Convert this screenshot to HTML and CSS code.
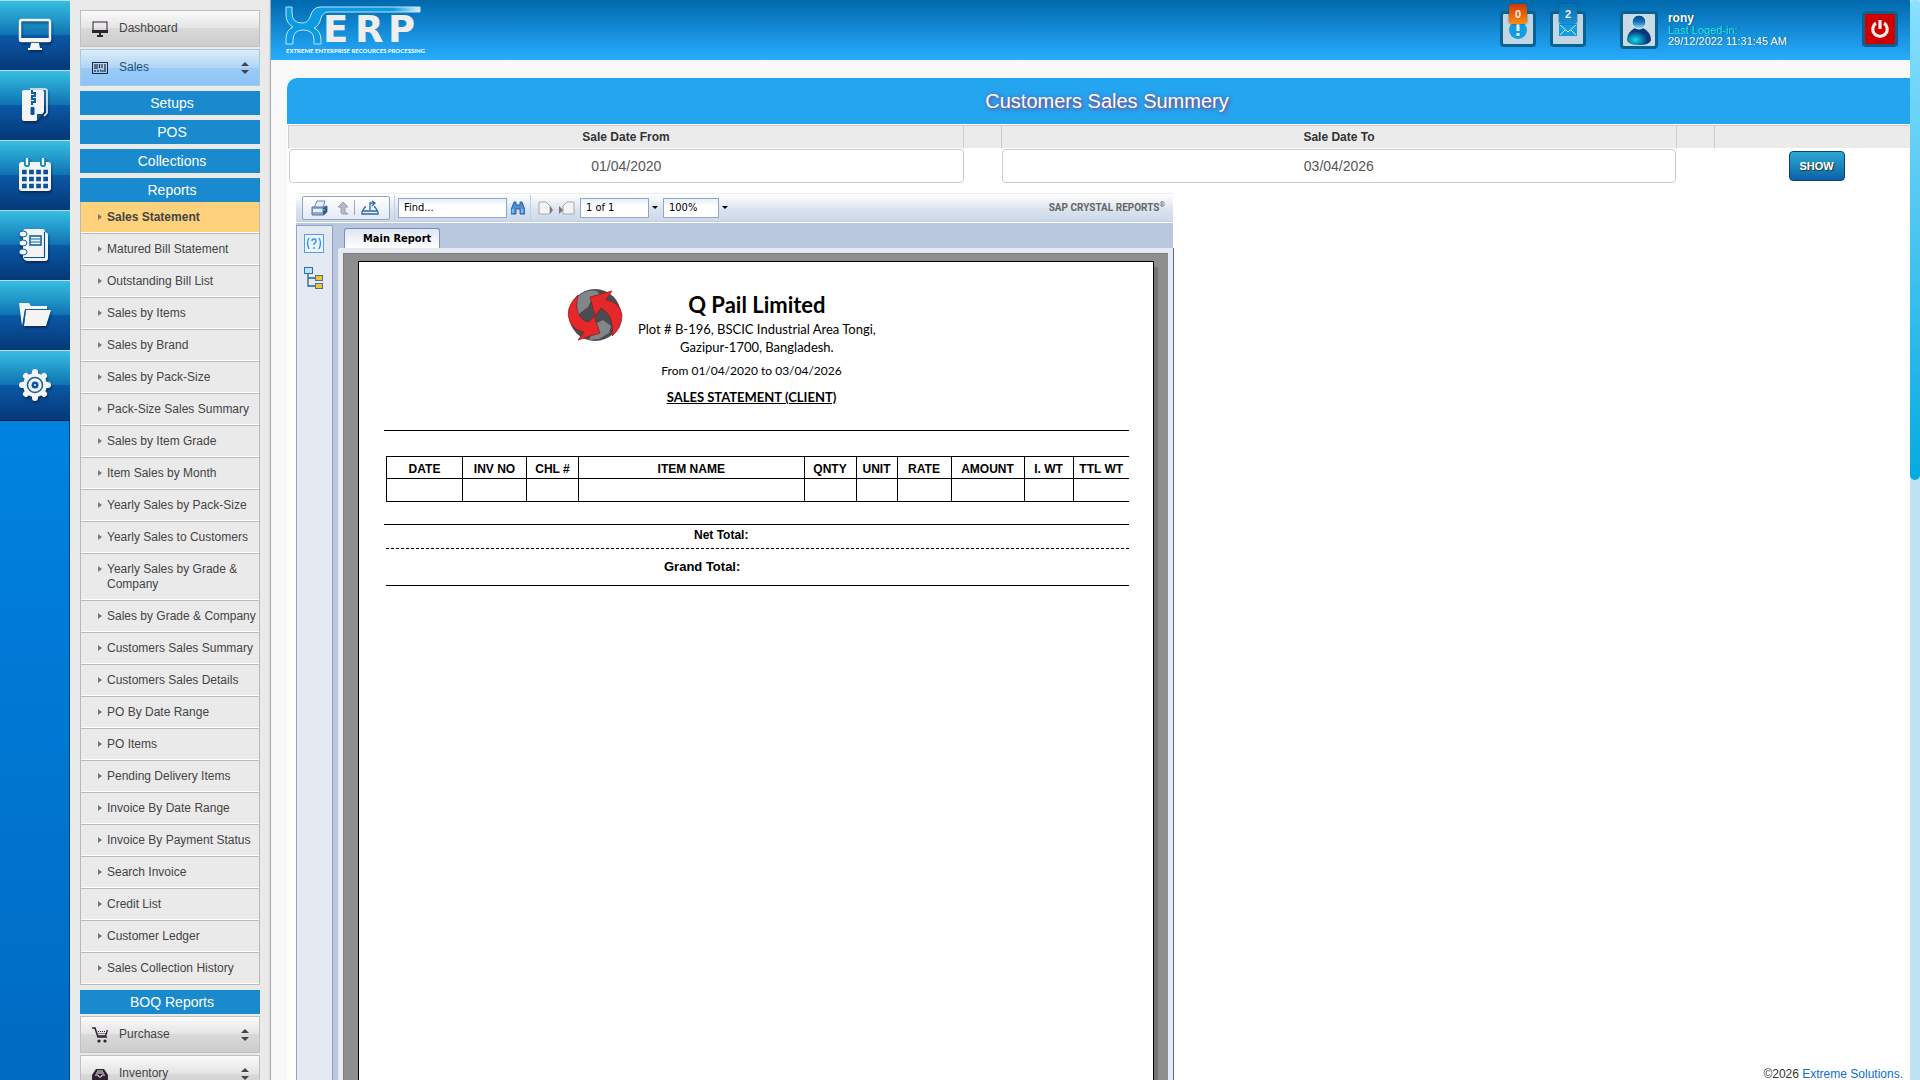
FILE: index.html
```html
<!DOCTYPE html>
<html lang="en">
<head>
    <meta charset="UTF-8">
    <meta name="viewport" content="width=device-width, initial-scale=1.0">
    <title>Customers Sales Summery</title>
    <link rel="stylesheet" href="styles.css">
</head>
<body>
    <div class="shell">
        <nav class="rail" aria-label="Modules">
            <a href="#" aria-label="Desktop">
                <svg width="34" height="34" viewBox="0 0 34 34"><rect x="2" y="2" width="30" height="21" rx="2" fill="none" stroke="#f4f4f4" stroke-width="2.5"/><path d="M1 20h32v2q0 2-2 2H3q-2 0-2-2z" fill="#f4f4f4"/><path d="M13 25h8l1 5h2v2H10v-2h2z" fill="#f4f4f4"/></svg>
            </a>
            <a href="#" aria-label="Archive">
                <svg width="34" height="34" viewBox="0 0 34 34"><path d="M12 1h15q2 0 2 2v22l-3 3" fill="none" stroke="#f4f4f4" stroke-width="1.6"/><path d="M6 2h18q2 0 2 2v20l-8 9H6q-2 0-2-2V4q0-2 2-2z" fill="#f4f4f4"/><path d="M19 32v-6h6z" fill="#0852a0"/><path d="M14 2v3h3v3h-3v3h3v3h-3v3" fill="none" stroke="#0e5f9f" stroke-width="2"/><rect x="12.500" y="19" width="4" height="8" rx="1" fill="#0852a0"/></svg>
            </a>
            <a href="#" aria-label="Calendar">
                <svg width="34" height="34" viewBox="0 0 34 34"><rect x="1" y="4" width="32" height="29" rx="3" fill="#f4f4f4"/><path d="M9 1v5M25 1v5" stroke="#1181b8" stroke-width="6" stroke-linecap="round"/><path d="M9 1v5M25 1v5" stroke="#f4f4f4" stroke-width="2.500" stroke-linecap="round"/><path d="M4 14h26M4 21h26M4 28h26" stroke="#0852a0" stroke-width="4.500" stroke-dasharray="4.700 2.400"/></svg>
            </a>
            <a href="#" aria-label="Notebook">
                <svg width="34" height="34" viewBox="0 0 34 34"><path d="M10 33q-4 0-5-4h21V4q4 0 4 3v23q0 3-3 3z" fill="#f4f4f4"/><path d="M5 4q0-3 3-3h16q3 0 3 3v25H5z" fill="#f4f4f4"/><path d="M26.500 4v25.500H6" stroke="#0852a0" fill="none" stroke-width="1.200"/><rect x="12" y="8" width="11" height="9" fill="none" stroke="#1064a5" stroke-width="1.600"/><path d="M13 11h9M13 14h9" stroke="#1064a5" stroke-width="1.200"/><g fill="#f4f4f4" stroke="#0e62a5"><ellipse cx="5" cy="6" rx="4" ry="3"/><ellipse cx="5" cy="15" rx="4" ry="3"/><ellipse cx="5" cy="24" rx="4" ry="3"/></g></svg>
            </a>
            <a href="#" aria-label="Folder">
                <svg width="34" height="34" viewBox="0 0 34 34"><path d="M1 5h10l2 3h16v3H7L4 28z" fill="#f4f4f4"/><path d="M8 12h25l-5 16H6z" fill="#f4f4f4"/><path d="M29 11.500H7.500L5.500 26" fill="none" stroke="#0f5fa0"/></svg>
            </a>
            <a href="#" aria-label="Settings">
                <svg width="34" height="34" viewBox="0 0 34 34"><g stroke="#f4f4f4" stroke-width="6" stroke-linecap="round"><path d="M17 4v26M4 17h26M8 8l18 18M26 8L8 26"/></g><circle cx="17" cy="17" r="12" fill="#f4f4f4"/><circle cx="17" cy="17" r="7.500" fill="none" stroke="#0f5fa0" stroke-width="1.500"/><circle cx="17" cy="17" r="3.500" fill="#0852a0"/><circle cx="17" cy="17" r="1" fill="#f4f4f4"/></svg>
            </a>
        </nav>

        <aside class="sidebar">
            <a class="menu-btn" href="#">
                <svg width="16" height="16" viewBox="0 0 16 16"><rect x="1" y="1" width="14" height="10" fill="none" stroke="#2f2130"/><path d="M0 9h16v3H0zM7 12h2v2H7zM5 14h6v2H5z" fill="#2f2130"/></svg>
                <span>Dashboard</span>
            </a>
            <a class="menu-btn active" href="#">
                <svg width="16" height="16" viewBox="0 0 16 16"><rect x="0.500" y="2.500" width="15" height="11" fill="none" stroke="#22243c"/><path d="M3 4v5M5 4v5M7.500 4v4M10 4v4M13 4v8M3 10v2M6 10v2" stroke="#22243c" stroke-width="1.200"/><path d="M8 10h1v2M11 10v2" stroke="#22243c" fill="none"/></svg>
                <span>Sales</span>
                <svg class="updown" width="8" height="12" viewBox="0 0 8 12"><path d="M4 0l4 4H0zM4 12L0 8h8z" fill="#444"/></svg>
            </a>
            <a class="sub-head" href="#">Setups</a>
            <a class="sub-head" href="#">POS</a>
            <a class="sub-head" href="#">Collections</a>
            <a class="sub-head" href="#">Reports</a>
            <ul class="report-list">
                <li class="current"><a href="#">Sales Statement</a></li>
                <li><a href="#">Matured Bill Statement</a></li>
                <li><a href="#">Outstanding Bill List</a></li>
                <li><a href="#">Sales by Items</a></li>
                <li><a href="#">Sales by Brand</a></li>
                <li><a href="#">Sales by Pack-Size</a></li>
                <li><a href="#">Pack-Size Sales Summary</a></li>
                <li><a href="#">Sales by Item Grade</a></li>
                <li><a href="#">Item Sales by Month</a></li>
                <li><a href="#">Yearly Sales by Pack-Size</a></li>
                <li><a href="#">Yearly Sales to Customers</a></li>
                <li><a href="#">Yearly Sales by Grade &amp; Company</a></li>
                <li><a href="#">Sales by Grade &amp; Company</a></li>
                <li><a href="#">Customers Sales Summary</a></li>
                <li><a href="#">Customers Sales Details</a></li>
                <li><a href="#">PO By Date Range</a></li>
                <li><a href="#">PO Items</a></li>
                <li><a href="#">Pending Delivery Items</a></li>
                <li><a href="#">Invoice By Date Range</a></li>
                <li><a href="#">Invoice By Payment Status</a></li>
                <li><a href="#">Search Invoice</a></li>
                <li><a href="#">Credit List</a></li>
                <li><a href="#">Customer Ledger</a></li>
                <li><a href="#">Sales Collection History</a></li>
            </ul>
            <a class="sub-head" href="#">BOQ Reports</a>
            <a class="menu-btn" href="#">
                <svg width="16" height="16" viewBox="0 0 16 16"><path d="M0 1h3l3 9h9" fill="none" stroke="#2f2130" stroke-width="1.600"/><path d="M15.500 3l-2 6H6" fill="none" stroke="#2f2130" stroke-width="1.300"/><path d="M6 4.500h8M6.500 6.500h7" stroke="#2f2130" stroke-dasharray="1 1"/><circle cx="7" cy="14" r="1.600" fill="#2f2130"/><circle cx="13" cy="14" r="1.600" fill="#2f2130"/></svg>
                <span>Purchase</span>
                <svg class="updown" width="8" height="12" viewBox="0 0 8 12"><path d="M4 0l4 4H0zM4 12L0 8h8z" fill="#444"/></svg>
            </a>
            <a class="menu-btn" href="#">
                <svg width="16" height="16" viewBox="0 0 16 16"><path d="M4 3h8l4 6v6H0V9z" fill="#2f2130"/><path d="M5 5h6M4 7h8M3 9h3l1 2h2l1-2h3" fill="none" stroke="#eee"/></svg>
                <span>Inventory</span>
                <svg class="updown" width="8" height="12" viewBox="0 0 8 12"><path d="M4 0l4 4H0zM4 12L0 8h8z" fill="#444"/></svg>
            </a>
        </aside>

        <main class="main">
            <header class="topbar">
                <div class="logo">
                    <svg width="136" height="39" viewBox="0 0 136 39" role="img" aria-label="XERP">
                        <defs>
                            <linearGradient id="bar" x1="0" x2="1"><stop offset="0.8" stop-color="#0b9be3"/><stop offset="1" stop-color="#d8f0fb"/></linearGradient>
                        </defs>
                        <path d="M1 2h6v6q0 10 10 10q6 0 8-6q3-10 10-10h100v5H43q-5 0-7 6q-2 8-7 10q7 3 7 12v4h-7v-4q0-10-11-10q-10 0-10 10v4H1v-5q0-9 7-12q-7-4-7-12z" fill="url(#bar)" stroke="#bfe6fa" stroke-width="1"/>
                        <text class="logo-name" x="38 70 103" y="37">ERP</text>
                    </svg>
                    <span class="logo-tag">EXTREME ENTERPRISE RECOURCES PROCESSING</span>
                </div>
                <div class="top-tools">
                    <button class="tool" type="button" aria-label="Alerts">
                        <svg width="20" height="20" viewBox="0 0 20 20"><circle cx="10" cy="10" r="9" fill="#159be0"/><path d="M10 4v7M10 13v3" stroke="#e9f3f8" stroke-width="3"/></svg>
                        <span class="badge hot">0</span>
                    </button>
                    <button class="tool" type="button" aria-label="Messages">
                        <svg width="20" height="20" viewBox="0 0 20 20"><rect x="1" y="4" width="18" height="12" fill="#159be0"/><path d="M2 5l8 7 8-7M2 15l5-5M18 15l-5-5" fill="none" stroke="#cfe6f1"/></svg>
                        <span class="badge">2</span>
                    </button>
                    <div class="user">
                        <span class="avatar">
                            <svg width="32" height="32" viewBox="0 0 32 32">
                                <defs>
                                    <linearGradient id="head" x1="0" x2="0" y1="0" y2="1"><stop offset="0" stop-color="#0a3d80"/><stop offset="0.500" stop-color="#1273b8"/><stop offset="1" stop-color="#9de8ff"/></linearGradient>
                                    <radialGradient id="torso" cx="0.350" cy="0.700"><stop offset="0" stop-color="#14e0ee"/><stop offset="1" stop-color="#073a7c"/></radialGradient>
                                </defs>
                                <path d="M4 26q0-8 8-12h8q8 4 8 12q-1 5-12 5T4 26z" fill="url(#torso)"/>
                                <circle cx="16" cy="8" r="7" fill="url(#head)" stroke="#e5f3fa"/>
                            </svg>
                        </span>
                        <div class="user-text">
                            <strong>rony</strong>
                            <span class="cyan">Last Loged-in:</span>
                            <span>29/12/2022 11:31:45 AM</span>
                        </div>
                    </div>
                    <button class="tool power" type="button" aria-label="Log out">
                        <svg width="20" height="20" viewBox="0 0 22 22" fill="none" stroke="#eee" stroke-width="3.500"><path d="M6.500 4.500a8 8 0 1 0 9 0M11 1v10"/></svg>
                    </button>
                </div>
            </header>

            <section class="panel">
                <h1>Customers Sales Summery</h1>
                <form class="filter">
                    <div class="filter-head">
                        <label for="dateFrom">Sale Date From</label>
                        <span></span>
                        <label for="dateTo">Sale Date To</label>
                        <span></span>
                        <span></span>
                    </div>
                    <div class="filter-row">
                        <input id="dateFrom" type="text" value="01/04/2020">
                        <span></span>
                        <input id="dateTo" type="text" value="03/04/2026">
                        <span></span>
                        <button class="show-btn" type="button">SHOW</button>
                    </div>
                </form>

                <div class="panel-body">
                    <div class="viewer">
                        <div class="toolbar">
                            <div class="tool-group">
                                <button type="button" aria-label="Print">
                                    <svg width="17" height="16" viewBox="0 0 17 16"><path d="M6 1h8l-2 7H3z" fill="#dfeffc" stroke="#6c86a8"/><path d="M1 7h11l4-1v6l-3 3H1z" fill="#8fa9cc" stroke="#5a769f"/><path d="M2 9h9v3H2z" fill="#e3eefb"/><path d="M12 8l4-2v6l-4 3z" fill="#2d5b9a"/><circle cx="13" cy="10" r="1" fill="#4fd04a"/></svg>
                                </button>
                                <button type="button" aria-label="Up">
                                    <svg width="12" height="14" viewBox="0 0 12 14"><path d="M6 1l5 5H8v5l3 2H6q-2 0-2-2V6H1z" fill="#b6b9c9" stroke="#9a9db2"/></svg>
                                </button>
                                <button class="export" type="button" aria-label="Export">
                                    <svg width="18" height="15" viewBox="0 0 18 15" fill="none" stroke="#2a6aa8" stroke-width="1.300"><path d="M9 10V3h5M11 1l3 2-3 3M5 7h-1l-3 5v2h16v-2l-3-5h-1M1 11h16"/></svg>
                                </button>
                            </div>
                            <div class="tool-find">
                                <input type="text" value="Find..." aria-label="Find">
                                <button type="button" aria-label="Search">
                                    <svg width="14" height="14" viewBox="0 0 14 14"><path d="M3 1h2v3h4V1h2l3 8v4H9V8H5v5H0V9z" fill="#4d8fd0" stroke="#2863a3"/><path d="M2 8v4M11 8v4" stroke="#bfe0fb"/></svg>
                                </button>
                            </div>
                            <div class="tool-pages">
                                <button type="button" aria-label="Previous page">
                                    <svg width="16" height="14" viewBox="0 0 16 14"><path d="M1 1h7l4 4v8H1z" fill="#f3f3f3" stroke="#a9a9a9"/><path d="M12 5l3 4-3 4z" fill="#777"/></svg>
                                </button>
                                <button type="button" aria-label="Next page">
                                    <svg width="16" height="14" viewBox="0 0 16 14"><path d="M4 13V5l4-4h7v12z" fill="#f3f3f3" stroke="#a9a9a9"/><path d="M0 5l4 4-4 4z" fill="#777"/></svg>
                                </button>
                                <input class="page-no" type="text" value="1 of 1" aria-label="Page">
                                <button class="drop" type="button" aria-label="Choose page"></button>
                                <input class="zoom-no" type="text" value="100%" aria-label="Zoom">
                                <button class="drop" type="button" aria-label="Choose zoom"></button>
                            </div>
                            <span class="brand">SAP CRYSTAL REPORTS<sup>®</sup></span>
                        </div>
                        <div class="viewer-body">
                            <div class="side-tools">
                                <button type="button" aria-label="Parameters">
                                    <svg width="20" height="19" viewBox="0 0 20 19"><rect x="0.500" y="0.500" width="19" height="18" fill="#e9f5ff" stroke="#5a9bef"/><path d="M5 4q-3 5 0 11M15 4q3 5 0 11M8 7q0-2 2-2t2 2q0 1-2 3v1M10 13v2" fill="none" stroke="#3b8be8" stroke-width="1.400"/></svg>
                                </button>
                                <button type="button" aria-label="Group tree">
                                    <svg width="20" height="22" viewBox="0 0 20 22"><path d="M4 6v13h8M4 11h8" fill="none" stroke="#2b5f8f" stroke-width="1.300"/><rect x="0.500" y="0.500" width="8" height="6" fill="#b7e4fb" stroke="#2f6ea3"/><rect x="11.500" y="8.500" width="7" height="5" fill="#f3c13a" stroke="#4c7396"/><rect x="11.500" y="16.500" width="7" height="5" fill="#f3c13a" stroke="#4c7396"/></svg>
                                </button>
                            </div>
                            <div class="report-area">
                                <button class="tab" type="button">Main Report</button>
                                <div class="frame">
                                    <article class="page">
                                        <div class="company">
                                            <svg width="56" height="54" viewBox="0 0 56 54">
                                                <circle cx="28" cy="27" r="26" fill="#4a4d50"/>
                                                <path d="M13 7q8-6 17-4l3 4-8 4-4 8-8 6-4 6-6-5q1-12 10-19zM28 36l8-4 8 6-2 7-10 6-10 1z" fill="#81868a"/>
                                                <path d="M11 7Q-3 20 3 34q5 9 14 10l-6 8 22-7-6-17-5 6Q6 30 11 7z" fill="#e5282b" stroke="#8b1719" stroke-width="0.700"/>
                                                <path d="M45 3L23 9l5 19 6-8q14 8 11 28 10-8 10-21Q53 14 39 12z" fill="#e5282b" stroke="#8b1719" stroke-width="0.700"/>
                                            </svg>
                                            <div>
                                                <h2>Q Pail Limited</h2>
                                                <p>Plot # B-196, BSCIC Industrial Area Tongi,<br>Gazipur-1700, Bangladesh.</p>
                                            </div>
                                        </div>
                                        <p class="period">From 01/04/2020 to 03/04/2026</p>
                                        <h3>SALES STATEMENT (CLIENT)</h3>
                                        <div class="statement">
                                            <table>
                                                <colgroup>
                                                    <col class="c-date"><col class="c-inv"><col class="c-chl"><col><col class="c-qnty"><col class="c-unit"><col class="c-rate"><col class="c-amount"><col class="c-iwt"><col class="c-ttl">
                                                </colgroup>
                                                <thead>
                                                    <tr><th>DATE</th><th>INV NO</th><th>CHL #</th><th>ITEM NAME</th><th>QNTY</th><th>UNIT</th><th>RATE</th><th>AMOUNT</th><th>I. WT</th><th>TTL WT</th></tr>
                                                </thead>
                                                <tbody>
                                                    <tr><td></td><td></td><td></td><td></td><td></td><td></td><td></td><td></td><td></td><td></td></tr>
                                                </tbody>
                                            </table>
                                            <div class="net">Net Total:</div>
                                            <div class="grand">Grand Total:</div>
                                        </div>
                                    </article>
                                </div>
                            </div>
                        </div>
                    </div>
                    <footer>©2026 <a href="#">Extreme Solutions.</a></footer>
                </div>
            </section>
        </main>
        <div class="scrollbar"><div class="thumb"></div></div>
    </div>
</body>
</html>
```
FILE: styles.css
```css
* {
    box-sizing: border-box;
}

body {
    margin: 0;
    font-family: "Liberation Sans", Arial, sans-serif;
    font-size: 12px;
    color: #333;
    background: #f9f9f9;
}

a {
    color: inherit;
    text-decoration: none;
}

button {
    padding: 0;
    border: none;
    background: none;
    cursor: pointer;
}

svg {
    display: block;
    flex: none;
}

.shell {
    display: flex;
    height: 100vh;
    overflow: hidden;
}

/* icon rail */
.rail {
    flex: none;
    width: 70px;
    background: linear-gradient(#0084e3, #0082e0 40%, #006bc2);
    box-shadow: inset -1px 0 #004a8c;
}

.rail a {
    display: flex;
    align-items: center;
    justify-content: center;
    height: 70px;
    padding-bottom: 2px;
    border-top: 1px solid #b9dcf0;
    background: linear-gradient(#36bfe2, #0f71b2 50%, #0a58a6 50%, #053878);
}

.rail a:last-child {
    height: 71px;
    border-bottom: 1px solid #0a1c3c;
}

.rail svg {
    filter: drop-shadow(1px 2px 1px rgba(0,0,0,0.4));
}

/* menu */
.sidebar {
    flex: none;
    width: 201px;
    padding: 10px 10px 0;
    overflow: hidden;
    background: #eaeaea;
    border-right: 1px solid #aaa;
    box-shadow: inset -1px 0 #ddd;
}

.menu-btn {
    display: flex;
    align-items: center;
    gap: 11px;
    height: 37px;
    margin-bottom: 2px;
    padding: 0 10px 0 11px;
    border: 1px solid #c0c0c0;
    background: linear-gradient(#fafafa, #e4e4e4 50%, #d9d9d9 50%, #cdcdcd);
    color: #444;
}

.menu-btn span {
    flex: 1;
    padding-bottom: 2px;
}

.menu-btn.active {
    border-color: #a9c8dc;
    background: linear-gradient(#dcecf9, #b0d5f6 50%, #9bccf6 50%, #8cc4f8);
    color: #1a5276;
}

.sub-head {
    display: block;
    margin: 5px 0 0;
    padding-left: 4px;
    background: #198acd;
    color: #fff;
    font-size: 14px;
    line-height: 24px;
    text-align: center;
}

.sub-head + .menu-btn {
    margin-top: 2px;
}

.report-list {
    margin: 0;
    padding: 0;
    list-style: none;
    border: 1px solid #b9b9b9;
    border-top: none;
}

.report-list li {
    position: relative;
    padding: 8px 0 7px 26px;
    border-top: 1px solid #b9b9b9;
    border-bottom: 1px solid #fff;
    line-height: 15px;
    color: #444;
}

.report-list li::before {
    content: "";
    position: absolute;
    left: 17px;
    top: 12px;
    border: 3px solid transparent;
    border-left: 4px solid #777;
    border-right: none;
}

.report-list .current {
    border-top: none;
    background: #fed17c;
    font-weight: bold;
}

/* main column */
.main {
    flex: 1;
    min-width: 0;
    display: flex;
    flex-direction: column;
    overflow: hidden;
}

.topbar {
    flex: none;
    display: flex;
    justify-content: space-between;
    height: 60px;
    padding: 5px 12px 0 14px;
    background: linear-gradient(#0068ac, #28adff);
}

.logo {
    display: flex;
    flex-direction: column;
    gap: 3px;
}

.logo svg {
    overflow: visible;
}

.logo-name {
    font: bold 37px "DejaVu Sans", sans-serif;
    fill: #eee;
}

.logo-tag {
    padding-left: 1px;
    color: #fff;
    font: bold 6px Lato, sans-serif;
    white-space: nowrap;
}

.top-tools {
    display: flex;
    align-items: flex-start;
    gap: 14px;
    padding-top: 6px;
}

.tool {
    position: relative;
    display: flex;
    align-items: flex-end;
    justify-content: center;
    width: 36px;
    height: 36px;
    padding-bottom: 4px;
    border: 3px solid #0b6291;
    border-radius: 4px;
    background: #c0d6e2;
}

.badge {
    position: absolute;
    top: -10px;
    left: 6px;
    width: 18px;
    border-radius: 3px;
    background: linear-gradient(#0a6fae, #1a8ed2);
    box-shadow: 0 0 2px #034a78;
    color: #eee;
    font-size: 11px;
    font-weight: bold;
    line-height: 20px;
}

.badge.hot {
    background: linear-gradient(#cc3a00, #ff8a10);
}

.user {
    display: flex;
    gap: 10px;
    margin: 0 61px 0 20px;
}

.avatar {
    width: 38px;
    height: 38px;
    border: 3px solid #0b6291;
    border-radius: 4px;
    background: #c8dae4;
}

.user-text {
    display: flex;
    flex-direction: column;
    color: #fff;
    font-size: 11px;
    line-height: 11px;
    text-shadow: 1px 0 1px rgba(0,0,0,0.4);
}

.user-text strong {
    font-size: 12px;
    line-height: 14px;
}

.cyan {
    color: #12f0f0;
}

.power {
    align-items: center;
    padding: 0;
    background: #d00000;
}

/* panel runs under the scrollbar */
.panel {
    flex: 1;
    min-height: 0;
    display: flex;
    flex-direction: column;
    margin: 18px -17px 0 16px;
    background: #fff;
    border-radius: 10px 10px 0 0;
}

.panel h1 {
    margin: 0;
    border-radius: 10px 10px 0 0;
    background: #23a5f0;
    color: #fff;
    font-size: 20px;
    font-weight: normal;
    line-height: 46px;
    text-align: center;
    text-shadow: 1px 1px 4px #a02060;
}

.filter {
    padding: 1px 0 0 1px;
}

.filter-head,
.filter-row {
    display: grid;
    grid-template-columns: 675fr 38fr 675fr 38fr 213fr;
}

.filter-head {
    height: 24px;
    border-top: 1px solid #ccc;
    border-bottom: 1px solid #ccc;
    background: #ebebeb;
    font-weight: bold;
    line-height: 22px;
    text-align: center;
}

.filter-head > * {
    border-left: 1px solid #ccc;
    border-bottom: 1px solid #fff;
}

.filter-row {
    padding-left: 1px;
}

.filter-row input {
    width: 100%;
    height: 34px;
    border: 1px solid #ccc;
    border-radius: 4px;
    background: #fff;
    color: #555;
    font: 14px "Liberation Sans", Arial, sans-serif;
    text-align: center;
}

.show-btn {
    justify-self: center;
    align-self: center;
    width: 56px;
    height: 30px;
    margin-right: 8px;
    border: 1px solid #0a4377;
    border-radius: 4px;
    background: linear-gradient(#2ea8d2, #1b86bd 50%, #0d5fa5);
    color: #fff;
    font: bold 11px "Liberation Sans", Arial, sans-serif;
    text-shadow: 1px 1px 1px #333;
}

.panel-body {
    flex: 1;
    min-height: 0;
    display: flex;
    justify-content: space-between;
    padding: 10px 24px 0 9px;
}

footer {
    align-self: flex-end;
    line-height: 12px;
}

footer a {
    color: #0a6ed1;
}

/* report viewer */
.viewer {
    display: flex;
    flex-direction: column;
    background: #b9c8de;
}

.toolbar {
    display: flex;
    align-items: center;
    height: 29px;
    border-top: 1px solid #eee;
    border-bottom: 1px solid #c3cee0;
    background: linear-gradient(#fff, #d9e2ee 60%, #cdd9e9);
    font-family: "DejaVu Sans Condensed", "DejaVu Sans", sans-serif;
}

.toolbar input {
    height: 20px;
    padding: 0 5px;
    border: 1px solid #8fa6cf;
    background: linear-gradient(#e8eef6, #fff 40%);
    color: #000;
    font: 11px "DejaVu Sans Condensed", "DejaVu Sans", sans-serif;
}

.tool-group,
.tool-find,
.tool-pages {
    display: flex;
    align-items: center;
}

.tool-group {
    gap: 9px;
    width: 88px;
    height: 24px;
    margin: 0 4px 0 6px;
    padding: 0 8px;
    border: 1px solid #8fa3c8;
    border-radius: 2px;
    background: linear-gradient(#fff, #e3e9f3);
}

.tool-group .export {
    margin-left: -4px;
    padding-left: 6px;
    border-left: 1px solid #a6a2bd;
}

.tool-find {
    gap: 4px;
    height: 26px;
    padding: 0 5px 0 3px;
    border-left: 1px solid #c4cfe2;
}

.tool-find input {
    width: 109px;
}

.tool-pages {
    height: 26px;
    padding-left: 7px;
    border-left: 1px solid #c4cfe2;
    gap: 5px;
}

.tool-pages .page-no,
.tool-pages .zoom-no {
    margin-right: -2px;
}

.page-no {
    width: 69px;
}

.zoom-no {
    width: 56px;
}

.drop {
    border: 3px solid transparent;
    border-top-color: #000;
    border-bottom: none;
}

.brand {
    margin-left: auto;
    padding-right: 8px;
    color: #666;
    font: bold 10px Roboto, sans-serif;
}

.brand sup {
    font-size: 7px;
    line-height: 1px;
}

.viewer-body {
    flex: 1;
    min-height: 0;
    display: flex;
    gap: 5px;
    border-top: 1px solid #fff;
}

.side-tools {
    display: flex;
    flex-direction: column;
    align-items: center;
    gap: 14px;
    width: 37px;
    margin-top: 2px;
    padding: 8px 2px 0 0;
    border: 1px solid #8fa3c8;
    border-bottom: none;
    background: #e4e9f2;
}

.report-area {
    display: flex;
    flex-direction: column;
    align-items: flex-start;
    padding-top: 5px;
}

.tab {
    flex: none;
    height: 20px;
    margin-left: 6px;
    padding: 0 8px 0 18px;
    border: 1px solid #7a8fb9;
    border-bottom: none;
    border-radius: 3px 3px 0 0;
    background: linear-gradient(#dfe6f1, #fff);
    color: #000;
    font: bold 11px "DejaVu Sans Condensed", "DejaVu Sans", sans-serif;
}

.frame {
    flex: 1;
    min-height: 0;
    padding: 8px 14px 0 15px;
    border: 5px solid #e6eaf4;
    border-bottom: none;
    border-top-left-radius: 3px;
    background: #8e8e8e;
    box-shadow: inset 1px 1px #7d7d7d, 1px 0 #66668a;
    overflow: hidden;
}

.page {
    width: 796px;
    min-height: 1123px;
    padding: 26px 24px 0 25px;
    border: 1px solid #000;
    background: #fff;
    box-shadow: 4px 6px #747474;
    color: #000;
    font-family: Lato, "Liberation Sans", sans-serif;
}

.company {
    display: flex;
    gap: 15px;
    padding-left: 183px;
}

.company > div {
    text-align: center;
}

.page h2 {
    margin: 4px 0 2px;
    font-size: 22px;
    line-height: 26px;
}

.page p {
    margin: 0;
    font-size: 13px;
    line-height: 18px;
}

.page .period {
    margin-top: 6px;
    padding-right: 10px;
    font-size: 12px;
    text-align: center;
}

.page h3 {
    margin: 8px 0 0;
    padding: 0 10px 24px 0;
    border-bottom: 1px solid #000;
    font-size: 13px;
    line-height: 18px;
    text-align: center;
    text-decoration: underline;
}

.statement {
    padding: 25px 0 0 2px;
    font-family: "Liberation Sans", Arial, sans-serif;
    font-weight: bold;
}

.statement table {
    width: 100%;
    table-layout: fixed;
    border-collapse: collapse;
}

.statement th,
.statement td {
    height: 23px;
    padding: 0;
    border: 1px solid #000;
    border-right: none;
    font-size: 12px;
    line-height: 14px;
}

.statement th {
    height: 22px;
    padding-top: 2px;
}

.c-date { width: 76px; }
.c-inv { width: 64px; }
.c-chl { width: 52px; }
.c-qnty { width: 52px; }
.c-unit { width: 41px; }
.c-rate { width: 54px; }
.c-amount { width: 73px; }
.c-iwt { width: 49px; }
.c-ttl { width: 56px; }

.net {
    margin: 22px 0 0 -2px;
    padding: 0 0 2px 310px;
    border-top: 1px solid #000;
    line-height: 21px;
}

.grand {
    padding-left: 278px;
    border-top: 1px dashed #000;
    border-bottom: 1px solid #000;
    font-size: 13px;
    line-height: 36px;
}

.scrollbar {
    flex: none;
    width: 10px;
    background: #bfe3f5;
}

.thumb {
    height: 480px;
    border-radius: 5px;
    background: linear-gradient(#8ae0ff, #05aae0);
}
```
